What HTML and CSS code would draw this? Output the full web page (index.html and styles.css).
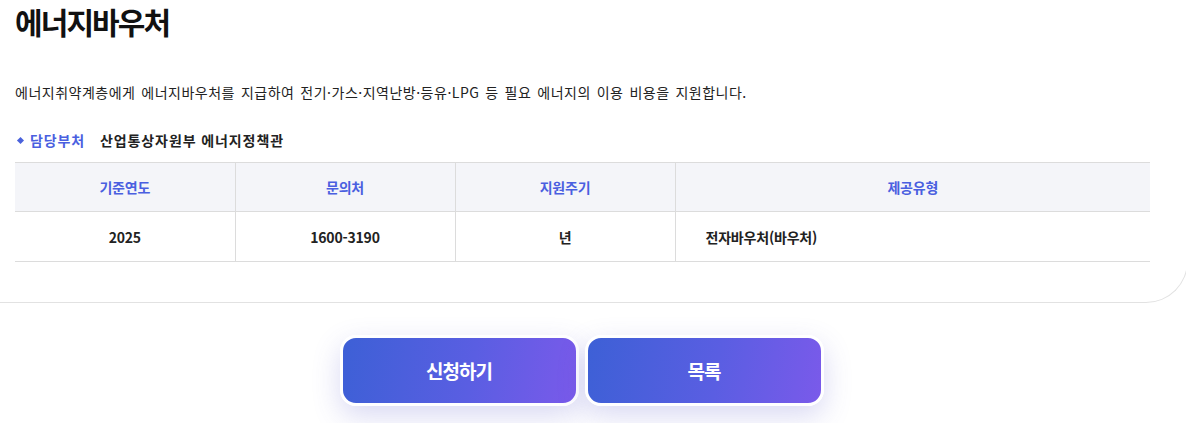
FILE: index.html
```html
<!DOCTYPE html>
<html lang="ko">
<head>
<meta charset="utf-8">
<title>에너지바우처</title>
<link rel="stylesheet" href="styles.css">
</head>
<body>
<div class="card">
  <h1 class="title">에너지바우처</h1>
  <p class="desc">에너지취약계층에게 에너지바우처를 지급하여 전기·가스·지역난방·등유·LPG 등 필요 에너지의 이용 비용을 지원합니다.</p>
  <div class="dept">
    <span class="bullet"></span>
    <span class="dept-label">담당부처</span>
    <span class="dept-value">산업통상자원부 에너지정책관</span>
  </div>
  <table class="info">
    <colgroup>
      <col class="c1"><col class="c2"><col class="c3"><col class="c4">
    </colgroup>
    <thead>
      <tr><th>기준연도</th><th>문의처</th><th>지원주기</th><th>제공유형</th></tr>
    </thead>
    <tbody>
      <tr><td>2025</td><td>1600-3190</td><td>년</td><td class="left">전자바우처(바우처)</td></tr>
    </tbody>
  </table>
</div>
<div class="actions">
  <a class="btn" href="#">신청하기</a>
  <a class="btn" href="#">목록</a>
</div>
</body>
</html>
```
FILE: styles.css
```css
html {
  margin: 0;
  padding: 0;
  overflow: hidden;
  background: #fff;
}
body {
  margin: 0;
  padding: 0 0 17px;
  width: 1186px;
  font-family: "Noto Sans CJK KR", "Noto Sans", sans-serif;
  color: #222;
}
.card {
  box-sizing: border-box;
  width: 1188px;
  padding: 0 0 40px 15px;
  border-right: 1px solid #e2e2e2;
  border-bottom: 1px solid #e2e2e2;
  border-bottom-right-radius: 42px;
}
.title {
  margin: 0;
  font-size: 30px;
  line-height: 42px;
  font-weight: 700;
  letter-spacing: -1.9px;
  color: #111;
}
.desc {
  margin: 38px 0 0;
  font-size: 14px;
  line-height: 24px;
  letter-spacing: 0.5px;
  word-spacing: 1.5px;
  color: #222;
}
.dept {
  display: flex;
  align-items: center;
  margin-top: 24px;
  height: 24px;
  font-size: 14px;
  font-weight: 700;
  letter-spacing: 0.9px;
}
.bullet {
  width: 5px;
  height: 5px;
  margin: 0 7px 0 3px;
  background: #4a62dc;
  transform: rotate(45deg);
}
.dept-label {
  color: #4a5fe0;
  width: 70px;
}
.dept-value {
  color: #222;
}
.info {
  margin-top: 10px;
  width: 1135px;
  border-collapse: collapse;
  table-layout: fixed;
  font-size: 14px;
  letter-spacing: -0.2px;
}
.c1, .c2, .c3 { width: 220px; }
.c4 { width: 475px; }
.info th, .info td {
  border-top: 1px solid #dcdcdc;
  border-bottom: 1px solid #dcdcdc;
  border-left: 1px solid #dcdcdc;
  text-align: center;
  padding: 0;
}
.info th:first-child, .info td:first-child { border-left: 0; }
.info th {
  height: 48px;
  background: #f4f5f9;
  color: #4a5fe0;
  font-weight: 700;
}
.info td {
  height: 49px;
  color: #222;
  font-weight: 700;
}
.info td.left {
  text-align: left;
  padding-left: 30px;
}
.actions {
  display: flex;
  justify-content: center;
  gap: 6px;
  padding: 32px 23px 0 0;
}
.btn {
  box-sizing: border-box;
  width: 239px;
  height: 71px;
  border: 3px solid #fff;
  border-radius: 16px;
  background: linear-gradient(100deg, #3d60d6 0%, #5a5ee2 55%, #7a5aea 100%);
  box-shadow: 0 10px 28px rgba(80, 80, 200, 0.22);
  color: #fff;
  font-size: 19px;
  font-weight: 700;
  letter-spacing: -1px;
  text-decoration: none;
  display: flex;
  align-items: center;
  justify-content: center;
}
```
